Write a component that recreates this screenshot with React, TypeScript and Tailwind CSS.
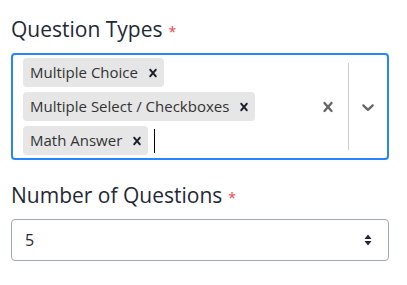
import { useState } from "react";

const chosen = ["Multiple Choice", "Multiple Select / Checkboxes", "Math Answer"];

function Cross({ size, className }: { size: number; className?: string }) {
  return (
    <svg width={size} height={size} viewBox="0 0 20 20" fill="currentColor" className={className}>
      <path d="M14.348 14.849c-0.469 0.469-1.229 0.469-1.697 0l-2.651-3.030-2.651 3.029c-0.469 0.469-1.229 0.469-1.697 0-0.469-0.469-0.469-1.229 0-1.697l2.758-3.15-2.759-3.152c-0.469-0.469-0.469-1.228 0-1.697s1.228-0.469 1.697 0l2.652 3.031 2.651-3.031c0.469-0.469 1.228-0.469 1.697 0s0.469 1.229 0 1.697l-2.758 3.152 2.758 3.15c0.469 0.469 0.469 1.229 0 1.698z" />
    </svg>
  );
}

function Label({ text }: { text: string }) {
  return (
    <label className="block text-[21px] leading-7 text-[#1f2937] mb-2.5">
      {text}
      <span className="ml-1.5 text-sm text-[#ef4444]">*</span>
    </label>
  );
}

export default function App() {
  const [count, setCount] = useState("5");

  return (
    <main
      className="min-h-screen bg-white pl-[11px] pr-[18px] pt-[15px]"
      style={{ fontFamily: '"Open Sans", "Noto Sans", sans-serif' }}
    >
      <Label text="Question Types" />
      <div className="flex items-center rounded border-2 border-[#2684ff] min-h-[107px]">
        <div className="flex flex-1 flex-wrap items-center gap-x-1 gap-y-[5px] pl-2.5 py-[3px]">
          {chosen.map((c) => (
            <div key={c} className="flex items-center rounded-sm bg-[#e6e6e6] h-[29px]">
              <span className="pl-[7px] pr-1 text-[15px] text-[#333]">{c}</span>
              <span className="px-[3px] text-[#1a1f2b]">
                <Cross size={16} />
              </span>
            </div>
          ))}
          <span className="ml-0.5 h-6 w-px bg-black" />
        </div>
        <div className="flex self-stretch items-center">
          <span className="px-2.5 text-[#666]">
            <Cross size={20} />
          </span>
          <span className="my-2 w-px self-stretch bg-[#ccc]" />
          <span className="px-[9px] text-[#666]">
            <svg width={20} height={20} viewBox="0 0 20 20" fill="currentColor">
              <path d="M4.516 7.548c0.436-0.446 1.043-0.481 1.576 0l3.908 3.747 3.908-3.747c0.533-0.481 1.141-0.446 1.574 0 0.436 0.445 0.408 1.197 0 1.615-0.406 0.418-4.695 4.502-4.695 4.502-0.217 0.223-0.502 0.335-0.787 0.335s-0.57-0.112-0.789-0.335c0 0-4.287-4.084-4.695-4.502s-0.436-1.17 0-1.615z" />
            </svg>
          </span>
        </div>
      </div>

      <div className="mt-[21px]">
        <Label text="Number of Questions" />
        <div className="relative">
          <select
            value={count}
            onChange={(e) => setCount(e.target.value)}
            className="block w-full h-[42px] appearance-none rounded border border-[#a3a9b3] bg-white pl-[13px] pr-8 text-base text-[#1f2937]"
          >
            {["1", "2", "3", "4", "5", "6", "7", "8", "9", "10"].map((n) => (
              <option key={n}>{n}</option>
            ))}
          </select>
          <svg
            className="pointer-events-none absolute right-[17px] top-1/2 -translate-y-1/2 text-[#1f2937]"
            width={8}
            height={12}
            viewBox="0 0 8 12"
            fill="currentColor"
          >
            <path d="M4 0.5 L7.5 5 H0.5 Z" />
            <path d="M0.5 7 H7.5 L4 11.5 Z" />
          </svg>
        </div>
      </div>
    </main>
  );
}
